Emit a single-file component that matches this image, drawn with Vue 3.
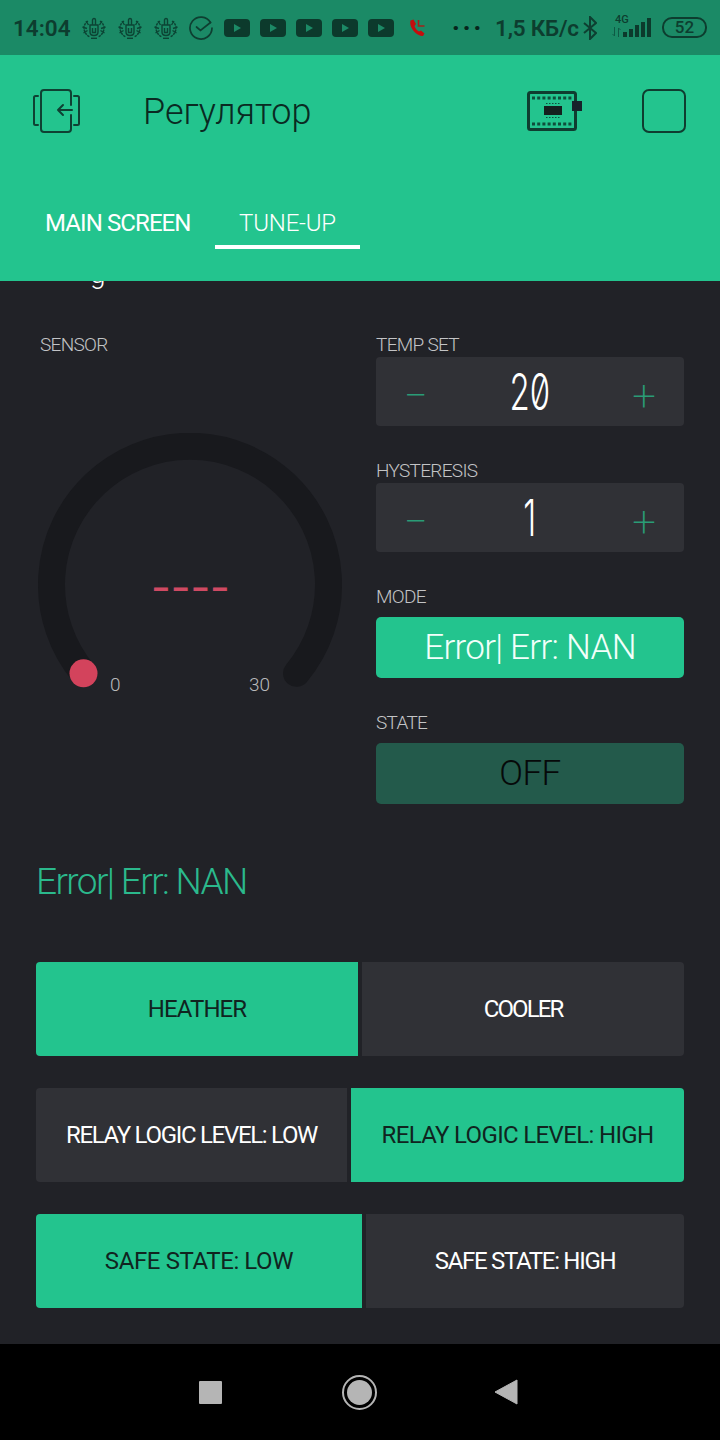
<script setup>
const wreaths = [1, 2, 3]
const plays = [1, 2, 3, 4, 5]
const bars = [5, 8, 12, 15, 19]
</script>

<template>
  <div class="phone">
    <div class="status">
      <span class="time">14:04</span>
      <svg v-for="w in wreaths" :key="'w' + w" class="wreath" viewBox="0 0 24 22" fill="none" stroke="#0c4434" stroke-width="1.4">
        <path d="M8 8h8v7c0 2-1.700 3.500-4 3.500S8 17 8 15z" />
        <path d="M10.500 8V3a1.500 1.500 0 0 1 3 0v5M10.500 11v4.500h3V11" />
        <path d="M6 4C3.500 5.500 1.500 9 2 12c.5 3 2.500 6.500 6 8M18 4c2.500 1.500 4.500 5 4 8-.5 3-2.500 6.500-6 8" stroke-dasharray="2.500 .8" />
        <path d="M4 4l2.500 4M.5 10l4.500 1.500M1.500 16l4-2.500M20 4l-2.500 4M23.500 10L19 11.500M22.500 16l-4-2.500" />
        <path d="M9 21.300h6" />
      </svg>
      <svg class="check" viewBox="0 0 24 24" fill="none" stroke="#0e3f31" stroke-width="1.7" stroke-linecap="round">
        <path d="M21.500 6.500A11 11 0 1 0 23 12" />
        <path d="M7.500 11l4 3.500L21.500 6.500" />
      </svg>
      <svg v-for="p in plays" :key="'p' + p" class="play" viewBox="0 0 26 18">
        <rect width="26" height="18" rx="4" fill="#0c3a2c" />
        <path d="M10 5l7 4-7 4z" fill="#1c8a66" />
      </svg>
      <svg class="call" viewBox="0 0 17 18" fill="none">
        <path d="M1.500 1.500L4.500.5 7 5 5.500 7c.5 2 2.500 4.500 4.500 5.500l2-1 3.500 3-1.500 2.500C8 17.500-.5 9 1.500 1.500z" fill="#c40d0d" />
        <path d="M9.500 1v6h6" stroke="#a3231a" stroke-width="1.600" />
      </svg>
      <span class="dots">· · ·</span>
      <span class="speed">1,5 КБ/с</span>
      <svg class="bt" viewBox="0 0 14 24" fill="none" stroke="#0e3f31" stroke-width="2">
        <path d="M1 7l12 10-6 6V1l6 6L1 17" />
      </svg>
      <div class="net">
        <span class="net-label">4G</span>
        <svg class="net-arrows" viewBox="0 0 9 10" fill="none" stroke="#0e5a45" stroke-width="1">
          <path d="M2.500 0v9M.5 7l2 2M6.500 10V1M8.500 3l-2-2" />
        </svg>
        <div class="bars">
          <i v-for="b in bars" :key="b" class="bar" :style="{ height: b + 'px' }"></i>
        </div>
      </div>
      <span class="battery">52</span>
    </div>

    <header class="head">
      <div class="toolbar">
        <svg class="back" viewBox="0 0 48 44" fill="none" stroke="#0f4133" stroke-width="2" stroke-linecap="round" stroke-linejoin="round">
          <path d="M5 7H2.500A1.500 1.500 0 0 0 1 8.500v26A1.500 1.500 0 0 0 2.500 36H5" />
          <path d="M41 7h3.500a1.500 1.500 0 0 1 1.500 1.500v26a1.500 1.500 0 0 1-1.500 1.500H41" />
          <path d="M38 16V4a3 3 0 0 0-3-3H11a3 3 0 0 0-3 3v36a3 3 0 0 0 3 3h24a3 3 0 0 0 3-3V26" />
          <path d="M39 21H25M30 16l-5 5 5 5" />
        </svg>
        <h1 class="title">Регулятор</h1>
        <svg class="device" viewBox="0 0 56 40" fill="none">
          <rect x="1.500" y="1.500" width="47" height="37" rx="2" stroke="#0f3d30" stroke-width="3" />
          <path d="M5 7h40M5 33h40" stroke="#0f4d3b" stroke-width="3" stroke-dasharray="3 2.200" />
          <rect x="17" y="15" width="18" height="9" fill="#14201e" />
          <path d="M19 12.500h14M19 26.500h14" stroke="#0f4d3b" stroke-width="1" stroke-dasharray="1.500 1.500" />
          <rect x="45" y="10" width="10" height="10" fill="#17232a" />
        </svg>
        <div class="square"></div>
      </div>
      <nav class="tabs">
        <span class="tab tab-main">MAIN SCREEN</span>
        <span class="tab tab-active">TUNE-UP</span>
      </nav>
    </header>

    <main class="body">
      <div class="clipped">g</div>
      <div class="widgets">
        <section class="left">
          <div class="label">SENSOR</div>
          <div class="gauge">
            <svg class="gauge-svg" viewBox="0 0 304 304" fill="none">
              <path d="M45.500 240.300A138.500 138.500 0 1 1 258.500 240.300" stroke="#18191d" stroke-width="27" stroke-linecap="round" />
              <circle cx="45.500" cy="240.300" r="14" fill="#d3435c" />
            </svg>
            <span class="gauge-value">––––</span>
            <span class="gauge-min">0</span>
            <span class="gauge-max">30</span>
          </div>
        </section>
        <section class="right">
          <div class="field">
            <div class="label">TEMP SET</div>
            <div class="stepper">
              <span class="sign">−</span>
              <span class="value"><span class="value-inner">20</span></span>
              <span class="sign">+</span>
            </div>
          </div>
          <div class="field">
            <div class="label">HYSTERESIS</div>
            <div class="stepper">
              <span class="sign">−</span>
              <span class="value"><span class="value-inner">1</span></span>
              <span class="sign">+</span>
            </div>
          </div>
          <div class="field">
            <div class="label">MODE</div>
            <div class="big-btn mode">Error| Err: NAN</div>
          </div>
          <div class="field">
            <div class="label">STATE</div>
            <div class="big-btn state">OFF</div>
          </div>
        </section>
      </div>

      <div class="error">Error| Err: NAN</div>

      <div class="segments">
        <div class="seg">
          <div class="cell on w-heat ls-heat">HEATHER</div>
          <div class="cell off ls-cool">COOLER</div>
        </div>
        <div class="seg">
          <div class="cell off w-relay ls-tight">RELAY LOGIC LEVEL: LOW</div>
          <div class="cell on ls-mid">RELAY LOGIC LEVEL: HIGH</div>
        </div>
        <div class="seg">
          <div class="cell on w-safe ls-safe">SAFE STATE: LOW</div>
          <div class="cell off ls-tight">SAFE STATE: HIGH</div>
        </div>
      </div>
    </main>

    <footer class="nav">
      <span class="nav-square"></span>
      <span class="nav-circle"><span class="nav-dot"></span></span>
      <svg class="nav-back" viewBox="0 0 24 26"><path d="M23 1v24L1 13z" fill="#b5b5b5" stroke="#b5b5b5" stroke-width="1" stroke-linejoin="round" /></svg>
    </footer>
  </div>
</template>

<style scoped>
.phone {
  width: 720px;
  height: 1440px;
  display: flex;
  flex-direction: column;
  overflow: hidden;
  font-family: Roboto, "Noto Sans", sans-serif;
  background: #212227;
}

/* status bar */
.status {
  height: 55px;
  flex: none;
  background: #1b8a66;
  display: flex;
  align-items: center;
  padding-left: 13px;
  color: #0d3d2f;
  box-sizing: border-box;
}
.time {
  font-size: 22.500px;
  font-weight: 600;
  width: 69px;
}
.wreath {
  width: 24px;
  height: 22px;
  margin-right: 12px;
}
.check {
  width: 24px;
  height: 24px;
  margin-right: 11px;
  margin-left: -1px;
}
.play {
  width: 26px;
  height: 18px;
  margin-right: 10px;
}
.call {
  width: 17px;
  height: 18px;
  margin-left: 5px;
}
.dots {
  font-size: 24px;
  font-weight: 900;
  width: 24px;
  margin-left: 26px;
  letter-spacing: -1.5px;
  white-space: nowrap;
  color: #08251c;
}
.speed {
  margin-left: 19px;
  font-size: 22.500px;
  font-weight: 600;
  white-space: nowrap;
  width: 88px;
  letter-spacing: -0.2px;
}
.bt {
  width: 14px;
  height: 24px;
}
.net {
  position: relative;
  width: 39px;
  height: 22px;
  margin: -3px 0 0 15px;
  display: flex;
  align-items: flex-end;
}
.net-label {
  position: absolute;
  left: 3px;
  top: -2px;
  font-size: 11px;
  font-weight: 500;
}
.net-arrows {
  width: 9px;
  height: 10px;
  margin-right: 2px;
}
.bars {
  display: flex;
  align-items: flex-end;
  gap: 2px;
}
.bar {
  display: block;
  width: 4px;
  background: #0c3a2c;
}
.battery {
  margin-left: 11px;
  width: 45px;
  height: 21px;
  box-sizing: border-box;
  border: 2px solid #0d3d2f;
  border-radius: 10px;
  font-size: 17px;
  font-weight: 500;
  line-height: 17px;
  text-align: center;
}

/* header */
.head {
  height: 226px;
  flex: none;
  background: #23c48e;
  display: flex;
  flex-direction: column;
}
.toolbar {
  height: 44px;
  margin-top: 34px;
  display: flex;
  align-items: center;
  padding-left: 33px;
}
.back {
  width: 48px;
  height: 44px;
}
.title {
  margin: 2px 0 0 62px;
  width: 384px;
  font-size: 36px;
  font-weight: 300;
  color: #0a2a22;
  white-space: nowrap;
}
.device {
  width: 56px;
  height: 40px;
}
.square {
  width: 44px;
  height: 44px;
  margin-left: 59px;
  box-sizing: border-box;
  border: 2px solid #0f3d30;
  border-radius: 7px;
}
.tabs {
  display: flex;
  margin-top: 68px;
  padding-left: 45px;
}
.tab {
  height: 48px;
  box-sizing: border-box;
  color: #fff;
  font-size: 24px;
  line-height: 44px;
  white-space: nowrap;
}
.tab-main {
  width: 170px;
  font-weight: 400;
  letter-spacing: -0.9px;
}
.tab-active {
  width: 145px;
  text-align: center;
  font-weight: 300;
  letter-spacing: -0.2px;
  border-bottom: 4px solid #fff;
}

/* body */
.body {
  height: 1063px;
  flex: none;
  overflow: hidden;
  display: flex;
  flex-direction: column;
  color: #fff;
}
.clipped {
  height: 14px;
  margin-top: -14px;
  padding-left: 90px;
  font-size: 28px;
  font-weight: 300;
  line-height: 14px;
  color: #fff;
  flex: none;
}
.widgets {
  display: flex;
  padding: 54px 36px 0 36px;
  flex: none;
}
.left {
  width: 340px;
}
.left .label {
  padding-left: 4px;
}
.right {
  width: 308px;
  display: flex;
  flex-direction: column;
  gap: 35px;
}
.label {
  height: 22px;
  font-size: 19px;
  font-weight: 300;
  line-height: 20px;
  color: #c3c4c6;
  white-space: nowrap;
  letter-spacing: -0.7px;
}
.gauge {
  position: relative;
  width: 304px;
  height: 304px;
  margin: 76px 0 0 2px;
}
.gauge-svg {
  display: block;
  width: 304px;
  height: 304px;
}
.gauge-value {
  position: absolute;
  left: 114px;
  top: 142px;
  font-size: 27px;
  line-height: 30px;
  font-weight: 900;
  letter-spacing: 3px;
  color: #cf4a63;
  white-space: nowrap;
}
.gauge-min,
.gauge-max {
  position: absolute;
  top: 241px;
  font-size: 19px;
  font-weight: 300;
  line-height: 22px;
  color: #b9babc;
}
.gauge-min {
  left: 72px;
}
.gauge-max {
  left: 211px;
}
.stepper {
  height: 69px;
  background: #303136;
  border-radius: 4px;
  display: flex;
  align-items: center;
  justify-content: space-between;
  padding: 0 18px;
}
.sign {
  width: 44px;
  font-size: 42px;
  font-weight: 200;
  line-height: 1;
  text-align: center;
  color: #2a9c76;
  margin-top: 8px;
}
.value {
  flex: 1;
  text-align: center;
}
.value-inner {
  display: inline-block;
  font-family: Inter, Roboto, sans-serif;
  font-feature-settings: "zero" 1;
  font-size: 50px;
  font-weight: 300;
  line-height: 60px;
  color: #fff;
  transform: scaleX(0.66);
}
.big-btn {
  margin-top: 8px;
  height: 61px;
  border-radius: 5px;
  display: flex;
  align-items: center;
  justify-content: center;
  font-size: 35px;
  font-weight: 300;
  white-space: nowrap;
}
.mode {
  background: #23c48e;
  color: #f2fffa;
  letter-spacing: -0.7px;
}
.state {
  background: #235a4b;
  color: #060909;
  letter-spacing: -0.6px;
}
.error {
  margin: 56px 0 0 36px;
  height: 44px;
  font-size: 37px;
  font-weight: 300;
  line-height: 44px;
  color: #2bb98c;
  white-space: nowrap;
  letter-spacing: -1.6px;
  flex: none;
}
.segments {
  margin-top: 58px;
  padding: 0 36px;
  display: flex;
  flex-direction: column;
  gap: 32px;
}
.seg {
  height: 94px;
  display: flex;
  gap: 4px;
  border-radius: 4px;
  overflow: hidden;
}
.cell {
  flex: 1;
  display: flex;
  align-items: center;
  justify-content: center;
  font-size: 24px;
  font-weight: 400;
  white-space: nowrap;
}
.cell.on {
  background: #23c48e;
  color: #10241f;
}
.cell.off {
  background: #303136;
  color: #fff;
}
.w-heat {
  flex: none;
  width: 322px;
}
.w-relay {
  flex: none;
  width: 311px;
}
.w-safe {
  flex: none;
  width: 326px;
}
.ls-heat {
  letter-spacing: -0.9px;
}
.ls-cool {
  letter-spacing: -1.9px;
}
.ls-tight {
  letter-spacing: -1.3px;
}
.ls-mid {
  letter-spacing: -0.65px;
}
.ls-safe {
  letter-spacing: -0.4px;
}

/* nav bar */
.nav {
  flex: 1;
  background: #000;
  display: flex;
  align-items: center;
  padding-left: 199px;
}
.nav-square {
  width: 23px;
  height: 23px;
  background: #b5b5b5;
  border-radius: 1px;
}
.nav-circle {
  width: 35px;
  height: 35px;
  margin-left: 120px;
  box-sizing: border-box;
  border: 2px solid #b5b5b5;
  border-radius: 50%;
  display: flex;
  align-items: center;
  justify-content: center;
}
.nav-dot {
  width: 25px;
  height: 25px;
  border-radius: 50%;
  background: #b5b5b5;
}
.nav-back {
  width: 24px;
  height: 26px;
  margin-left: 117px;
}
</style>
